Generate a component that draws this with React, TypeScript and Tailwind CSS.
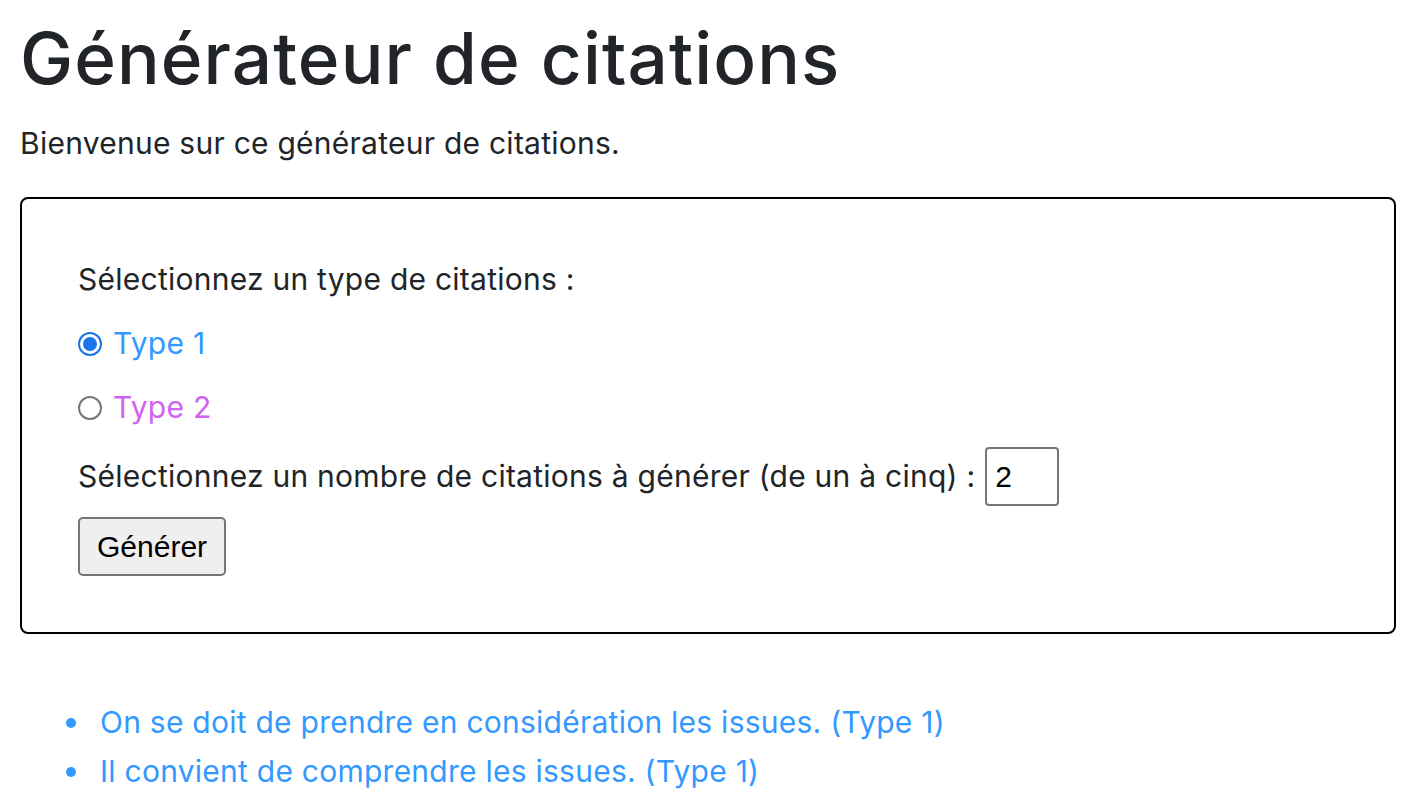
export default function App() {
  const quotes = [
    'On se doit de prendre en considération les issues. (Type 1)',
    'Il convient de comprendre les issues. (Type 1)',
  ]

  return (
    <div className="min-h-screen bg-white pl-[20px] pr-[22px] pt-[16px] text-[#212529] font-['Inter',sans-serif]">
      <h1 className="text-[71px] leading-[84px] font-medium tracking-[1.1px]">Générateur de citations</h1>
      <p className="mt-[22px] text-[30px] leading-[42px] tracking-[0.25px]">Bienvenue sur ce générateur de citations.</p>

      {/* Formulaire */}
      <div className="mt-[33px] border-2 border-black rounded-[8px] p-[56px] text-[30px] tracking-[0.25px]">
        <div className="leading-[49px]">Sélectionnez un type de citations :</div>

        <label className="mt-[15px] flex items-center gap-[11px] leading-[49px] text-[#3399ff]">
          <span className="w-[24px] h-[24px] rounded-full border-2 border-[#1a73e8] flex items-center justify-center">
            <span className="w-[14px] h-[14px] rounded-full bg-[#1a73e8]" />
          </span>
          Type 1
        </label>

        <label className="mt-[15px] flex items-center gap-[11px] leading-[49px] text-[#d063f0]">
          <span className="w-[24px] h-[24px] rounded-full border-2 border-[#767676]" />
          Type 2
        </label>

        <div className="mt-[15px] flex items-center gap-[10px]">
          <span className="leading-[49px]">Sélectionnez un nombre de citations à générer (de un à cinq) :</span>
          <input
            type="text"
            defaultValue="2"
            className="w-[74px] h-[59px] border-2 border-[#767676] rounded-[4px] px-[8px] text-[30px] tracking-normal text-black font-['Liberation_Sans',sans-serif] outline-none"
          />
        </div>

        <button className="mt-[11px] h-[59px] px-[17px] bg-[#efefef] border-2 border-[#767676] rounded-[5px] text-[30px] tracking-normal text-black font-['Liberation_Sans',sans-serif]">
          Générer
        </button>
      </div>

      {/* Citations */}
      <ul className="mt-[64px] pl-[46px] text-[30px] leading-[49px] tracking-[0.25px] text-[#3399ff]">
        {quotes.map((q, i) => (
          <li key={i} className="flex items-center gap-[24px]">
            <span className="w-[10px] h-[10px] rounded-full bg-[#3399ff] shrink-0" />
            {q}
          </li>
        ))}
      </ul>
    </div>
  )
}
